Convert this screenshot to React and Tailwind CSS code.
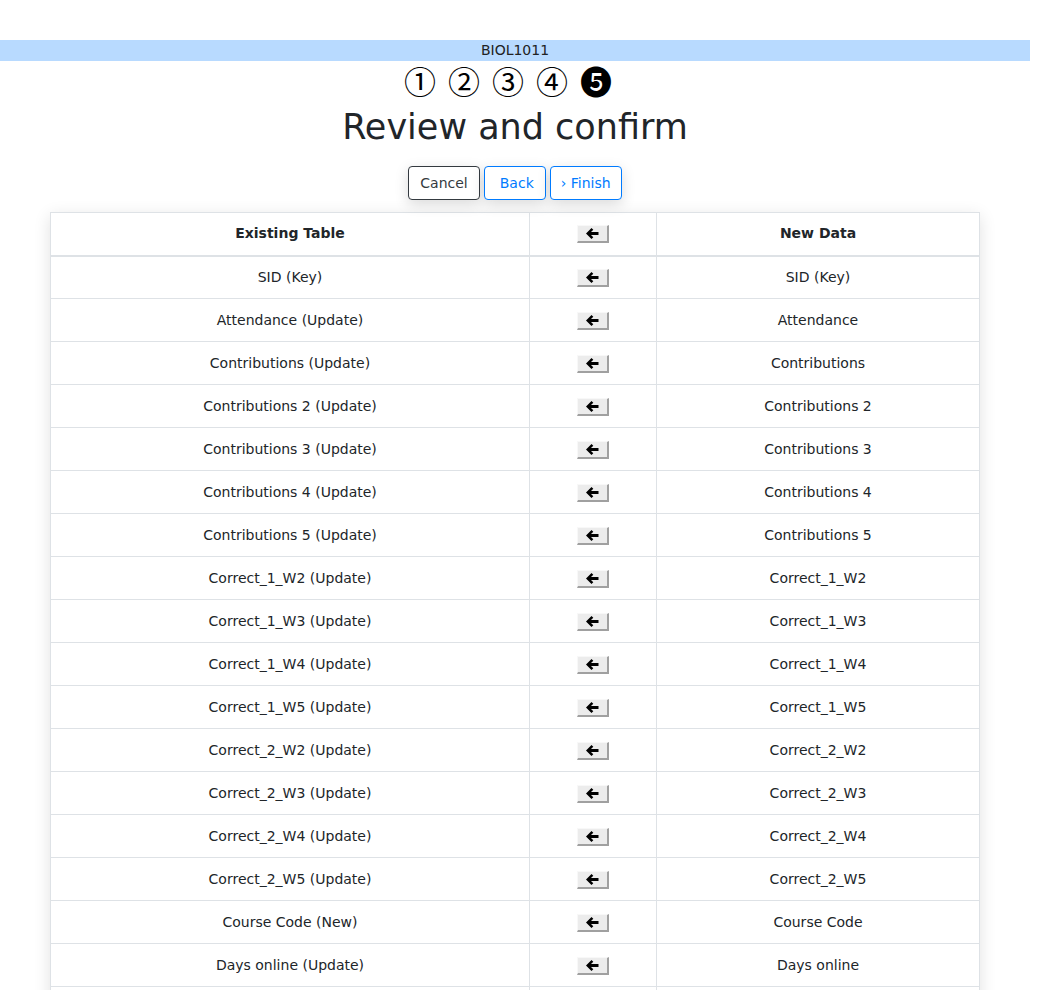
import React from 'react';

const rows = [
  ['SID (Key)', 'SID (Key)'],
  ['Attendance (Update)', 'Attendance'],
  ['Contributions (Update)', 'Contributions'],
  ['Contributions 2 (Update)', 'Contributions 2'],
  ['Contributions 3 (Update)', 'Contributions 3'],
  ['Contributions 4 (Update)', 'Contributions 4'],
  ['Contributions 5 (Update)', 'Contributions 5'],
  ['Correct_1_W2 (Update)', 'Correct_1_W2'],
  ['Correct_1_W3 (Update)', 'Correct_1_W3'],
  ['Correct_1_W4 (Update)', 'Correct_1_W4'],
  ['Correct_1_W5 (Update)', 'Correct_1_W5'],
  ['Correct_2_W2 (Update)', 'Correct_2_W2'],
  ['Correct_2_W3 (Update)', 'Correct_2_W3'],
  ['Correct_2_W4 (Update)', 'Correct_2_W4'],
  ['Correct_2_W5 (Update)', 'Correct_2_W5'],
  ['Course Code (New)', 'Course Code'],
  ['Days online (Update)', 'Days online'],
  ['Email (Update)', 'Email'],
  ['First Name (Update)', 'First Name'],
];

const steps = ['①', '②', '③', '④', '❺'];

function ArrowButton() {
  return (
    <button className="inline-flex items-center justify-center w-[32px] h-[18px] bg-[#ececec] border border-[#f8f8f8] border-r-[#a0a0a0] border-b-[#a0a0a0] border-r-2 border-b-2 align-middle">
      <svg width="13" height="11" viewBox="0 0 13 11">
        <path d="M5.5 0 L0 5.5 L5.5 11 L7.3 9.2 L5 7 L12.5 7 L12.5 4 L5 4 L7.3 1.8 Z" fill="#000" />
      </svg>
    </button>
  );
}

export default function App() {
  return (
    <div className="w-[1030px] bg-white text-[#212529] pt-[40px]" style={{ fontFamily: '"DejaVu Sans", sans-serif' }}>
      <div className="h-[21px] bg-[#b8daff] text-center text-[14px] leading-[21px] text-[#222]">BIOL1011</div>

      {/* step indicator */}
      <div
        className="flex justify-center pr-[14px] mb-[6px] text-[32px] leading-[38px] text-black"
        style={{ fontFamily: '"Noto Sans CJK JP", "DejaVu Sans", sans-serif' }}
      >
        {steps.map((s) => (
          <span key={s} className="w-[44px] text-center">{s}</span>
        ))}
      </div>

      <h1 className="text-center text-[35px] leading-[44px] font-normal">Review and confirm</h1>

      <div className="flex justify-center gap-[4px] mt-[17px]">
        <button className="h-[34px] px-[11px] text-[14px] rounded-[4px] border border-[#343a40] text-[#343a40] bg-white shadow-[0_4px_14px_rgba(0,0,0,0.15)]">Cancel</button>
        <button className="h-[34px] pl-[15px] pr-[11px] text-[14px] rounded-[4px] border border-[#007bff] text-[#007bff] bg-white shadow-[0_4px_14px_rgba(0,0,0,0.15)]">Back</button>
        <button className="h-[34px] px-[10px] text-[14px] rounded-[4px] border border-[#007bff] text-[#007bff] bg-white shadow-[0_4px_14px_rgba(0,0,0,0.15)]">› Finish</button>
      </div>

      <div className="mx-[50px] mt-[12px] shadow-[0_4px_16px_rgba(0,0,0,0.12)]">
        <table className="w-full border-collapse text-[14px] text-center">
          <thead>
            <tr className="h-[43px]">
              <th className="w-[479px] border border-[#dee2e6] border-b-2 font-bold">Existing Table</th>
              <th className="w-[127px] border border-[#dee2e6] border-b-2"><ArrowButton /></th>
              <th className="border border-[#dee2e6] border-b-2 font-bold">New Data</th>
            </tr>
          </thead>
          <tbody>
            {rows.map(([a, b]) => (
              <tr key={a} className="h-[43px]">
                <td className="border border-[#dee2e6]">{a}</td>
                <td className="border border-[#dee2e6]"><ArrowButton /></td>
                <td className="border border-[#dee2e6]">{b}</td>
              </tr>
            ))}
          </tbody>
        </table>
      </div>
    </div>
  );
}
